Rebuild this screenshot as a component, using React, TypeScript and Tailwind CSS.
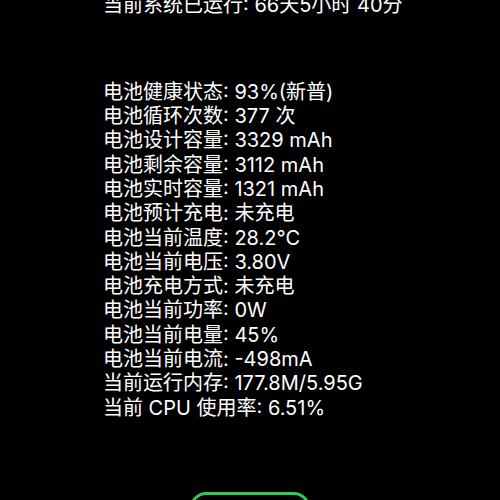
import React from "react";

const lines = [
  "电池健康状态: 93%(新普)",
  "电池循环次数: 377 次",
  "电池设计容量: 3329 mAh",
  "电池剩余容量: 3112 mAh",
  "电池实时容量: 1321 mAh",
  "电池预计充电: 未充电",
  "电池当前温度: 28.2°C",
  "电池当前电压: 3.80V",
  "电池充电方式: 未充电",
  "电池当前功率: 0W",
  "电池当前电量: 45%",
  "电池当前电流: -498mA",
  "当前运行内存: 177.8M/5.95G",
  "当前 CPU 使用率: 6.51%",
];

export default function App() {
  return (
    <div
      className="w-[500px] h-[500px] overflow-hidden bg-black text-white"
      style={{ fontFamily: 'Inter, "Noto Sans CJK SC", sans-serif' }}
    >
      <div className="pl-[103px] text-[20px] leading-[24.3px]">
        <div className="-mt-[7px]">当前系统已运行: 66天5小时 40分</div>
        <div className="mt-[62.5px]">
          {lines.map((l) => (
            <div key={l}>{l}</div>
          ))}
        </div>
      </div>
      <div className="mt-[72px] flex justify-center">
        <div className="w-[120px] h-[44px] rounded-[16px] border-[3px] border-[#34c759]" />
      </div>
    </div>
  );
}
